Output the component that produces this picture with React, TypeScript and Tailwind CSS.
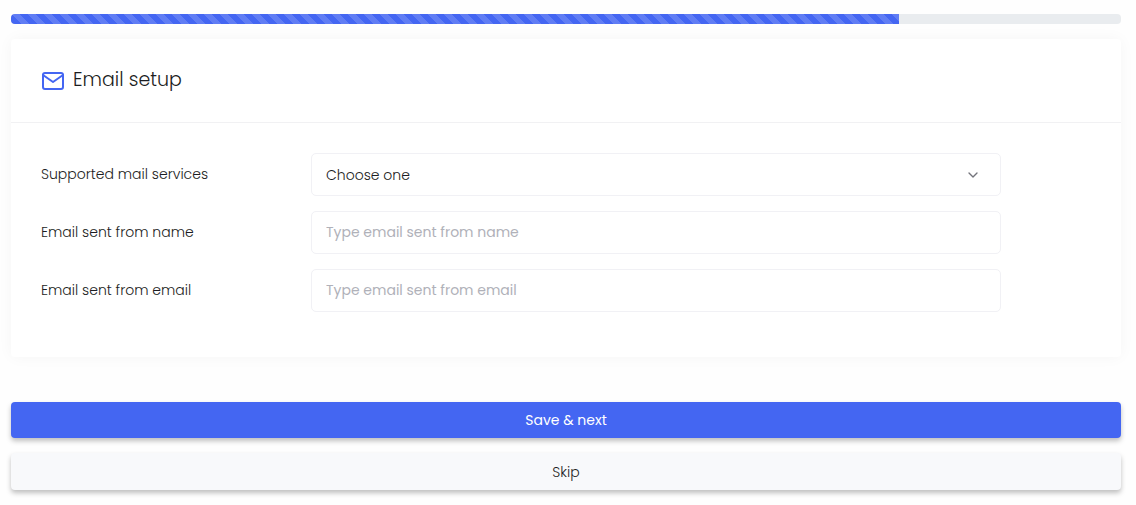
import React from "react";
import { ChevronDown } from "lucide-react";

const control =
  "block h-[43px] w-full rounded-[5px] border border-[#f1f1f5] bg-white px-[14px] text-sm outline-none placeholder:text-[#b0b1b9] placeholder:opacity-100 focus:border-[#4466f2]";

const button =
  "w-full cursor-pointer rounded-[4px] text-sm shadow-[0_3px_5px_rgba(0,0,0,0.25)]";

function MailIcon() {
  return (
    <svg
      className="size-6 text-[#4466f2]"
      viewBox="0 0 24 24"
      fill="none"
      stroke="currentColor"
      strokeWidth="2"
      strokeLinecap="round"
      strokeLinejoin="round"
      aria-hidden="true"
    >
      <path d="M4 4h16c1.1 0 2 .9 2 2v12c0 1.1-.9 2-2 2H4c-1.1 0-2-.9-2-2V6c0-1.1.9-2 2-2z" />
      <path d="M22 6 12 13 2 6" />
    </svg>
  );
}

function Field({
  id,
  label,
  children,
}: {
  id: string;
  label: string;
  children: React.ReactNode;
}) {
  return (
    <div className="-mx-[15px] mb-[15px] flex items-center">
      <label htmlFor={id} className="w-1/4 px-[15px] text-sm leading-[21px]">
        {label}
      </label>
      <div className="w-2/3 px-[15px]">{children}</div>
    </div>
  );
}

export default function App() {
  return (
    <main className="bg-[#fefefe] pt-[14px] pr-[15px] pb-[15px] pl-[11px] font-['Poppins','Inter',sans-serif] font-light text-[#1c1d22]">
      <div
        role="progressbar"
        aria-label="Setup progress"
        aria-valuenow={80}
        aria-valuemin={0}
        aria-valuemax={100}
        className="h-[10px] overflow-hidden rounded-[4px] bg-[#e9ecef]"
      >
        <div className="h-full w-4/5 bg-[#4466f2] bg-[linear-gradient(45deg,rgba(255,255,255,0.15)_25%,transparent_25%,transparent_50%,rgba(255,255,255,0.15)_50%,rgba(255,255,255,0.15)_75%,transparent_75%,transparent)] bg-[length:16px_16px]" />
      </div>

      <form onSubmit={(e) => e.preventDefault()}>
        <section className="mt-[15px] rounded-[4px] bg-white shadow-[0_0_15px_rgba(0,0,0,0.04)]">
          <header className="flex h-[84px] items-center gap-2 border-b border-[#f1f1f3] px-[30px]">
            <MailIcon />
            <h1 className="text-[19px]">Email setup</h1>
          </header>
          <div className="p-[30px]">
            <Field id="service" label="Supported mail services">
              <div className="relative">
                <select id="service" className={`${control} appearance-none`}>
                  <option>Choose one</option>
                </select>
                <ChevronDown
                  className="pointer-events-none absolute top-[14px] right-5 size-4 text-[#73747b]"
                  strokeWidth={2}
                />
              </div>
            </Field>
            <Field id="from-name" label="Email sent from name">
              <input
                id="from-name"
                type="text"
                placeholder="Type email sent from name"
                className={`${control} font-normal`}
              />
            </Field>
            <Field id="from-email" label="Email sent from email">
              <input
                id="from-email"
                type="email"
                placeholder="Type email sent from email"
                className={`${control} font-normal`}
              />
            </Field>
          </div>
        </section>

        <div className="mt-[45px] flex flex-col gap-[15px]">
          <button type="submit" className={`${button} h-9 bg-[#4466f2] font-normal text-white`}>
            Save &amp; next
          </button>
          <button type="button" className={`${button} h-[37px] bg-[#f8f9fb]`}>
            Skip
          </button>
        </div>
      </form>
    </main>
  );
}
